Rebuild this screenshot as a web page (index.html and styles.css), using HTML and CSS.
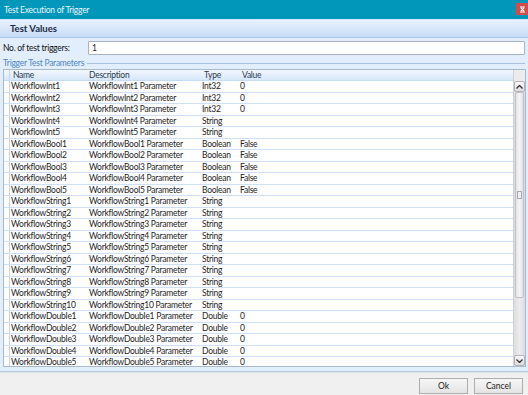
FILE: index.html
```html
<!DOCTYPE html>
<html lang="en">
<head>
  <meta charset="UTF-8">
  <title>Test Execution of Trigger</title>
  <link rel="stylesheet" href="styles.css">
</head>
<body>
  <div class="window">
    <div class="titlebar">
      <span class="title">Test Execution of Trigger</span>
      <span class="close-btn">
        <svg width="7" height="7" viewBox="0 0 7 7"><path d="M1 1h5M1 6h5M2 2l3 3M5 2l-3 3" stroke="#fff" stroke-width="1.2" fill="none"/></svg>
      </span>
    </div>
    <div class="section-header">Test Values</div>

    <div class="content">
      <div class="field-row">
        <label>No. of test triggers:</label>
        <div class="text-input">1</div>
      </div>
      <div class="group-label"><span>Trigger Test Parameters</span></div>

      <div class="grid">
        <div class="grid-main">
          <div class="grid-row grid-head">
            <div class="row-head"></div>
            <div class="cell name">Name</div>
            <div class="cell desc">Description</div>
            <div class="cell type">Type</div>
            <div class="cell value">Value</div>
          </div>
          <div class="grid-rows" id="rows"></div>
        </div>
        <div class="scrollbar">
          <div class="sb-corner"></div>
          <div class="sb-btn">
            <svg width="7" height="4" viewBox="0 0 7 4"><path d="M0.5 3.5L3.5 0.5L6.5 3.5" stroke="#333" stroke-width="1.3" fill="none"/></svg>
          </div>
          <div class="sb-track">
            <div class="sb-thumb"><span class="grip"></span></div>
          </div>
          <div class="sb-btn">
            <svg width="7" height="4" viewBox="0 0 7 4"><path d="M0.5 0.5L3.5 3.5L6.5 0.5" stroke="#333" stroke-width="1.3" fill="none"/></svg>
          </div>
        </div>
      </div>
    </div>

    <div class="footer">
      <button class="btn">Ok</button>
      <button class="btn">Cancel</button>
    </div>
  </div>

  <script>
    // parameter rows
    const params = [];
    for (let i = 1; i <= 5; i++) params.push(['WorkflowInt' + i, i <= 3 ? 'Int32' : 'String', i <= 3 ? '0' : '']);
    for (let i = 1; i <= 5; i++) params.push(['WorkflowBool' + i, 'Boolean', 'False']);
    for (let i = 1; i <= 10; i++) params.push(['WorkflowString' + i, 'String', '']);
    for (let i = 1; i <= 5; i++) params.push(['WorkflowDouble' + i, 'Double', '0']);

    const rows = document.getElementById('rows');
    params.forEach(([name, type, value]) => {
      const row = document.createElement('div');
      row.className = 'grid-row';
      row.innerHTML =
        '<div class="row-head"></div>' +
        '<div class="cell name">' + name + '</div>' +
        '<div class="cell desc">' + name + ' Parameter</div>' +
        '<div class="cell type">' + type + '</div>' +
        '<div class="cell value">' + value + '</div>';
      rows.appendChild(row);
    });
  </script>
</body>
</html>
```

FILE: styles.css
```css
body {
  margin: 0;
  font-family: Lato, 'Liberation Sans', Arial, sans-serif;
  font-size: 8.5px;
  letter-spacing: -0.25px;
  color: #1e1e1e;
}
.window {
  width: 528px;
  height: 395px;
  display: flex;
  flex-direction: column;
  overflow: hidden;
  background: #f0f0f0;
}
.titlebar {
  height: 19px;
  background: #0097ba;
  display: flex;
  align-items: center;
  justify-content: space-between;
  padding-left: 4px;
  flex-shrink: 0;
}
.title {
  color: #e8f6fa;
  font-size: 8.5px;
}
.close-btn {
  width: 12px;
  height: 12px;
  background: #d24c4c;
  display: flex;
  align-items: center;
  justify-content: center;
  align-self: flex-start;
  margin-top: 3px;
}
.section-header {
  height: 17px;
  flex-shrink: 0;
  background: linear-gradient(#e9f2fe, #c6dbf7);
  border-bottom: 1px solid #a6c3e8;
  border-top: 1px solid #d4e5fb;
  padding-left: 10px;
  font-weight: bold;
  font-size: 9.5px;
  letter-spacing: 0;
  color: #1b2b44;
  line-height: 17px;
}
.content {
  background: #e3eefc;
  padding: 3px 2px 4px 3px;
  height: 334px;
  flex-shrink: 0;
  box-sizing: border-box;
  display: flex;
  flex-direction: column;
  border-bottom: 1px solid #b8c9dc;
}
.field-row {
  display: flex;
  align-items: center;
  height: 14px;
}
.field-row label {
  width: 85px;
  color: #111;
}
.text-input {
  flex: 1;
  height: 12px;
  background: #fff;
  border: 1px solid #aab3bd;
  border-radius: 1px;
  padding-left: 3px;
  line-height: 12px;
  margin-right: 1px;
}
.group-label {
  display: flex;
  align-items: center;
  margin-top: 3px;
  height: 10px;
  color: #4f86c2;
}
.group-label::after {
  content: "";
  flex: 1;
  height: 1px;
  background: #a9c2df;
  margin-left: 3px;
  margin-right: 1px;
}
.grid {
  margin-top: 1px;
  flex: 1;
  display: flex;
  border: 1px solid #a7b9cc;
  background: #fff;
  overflow: hidden;
}
.grid-main {
  flex: 1;
  display: flex;
  flex-direction: column;
  overflow: hidden;
}
.grid-row {
  display: grid;
  grid-template-columns: 6px 78px 113px 38px 1fr;
  height: 11.5px;
  flex-shrink: 0;
  border-bottom: 1px solid #cfe0f6;
  box-sizing: border-box;
  line-height: 11px;
  white-space: nowrap;
}
.grid-head {
  height: 11px;
  background: linear-gradient(#f4f8fe, #d7e7fb);
  border-bottom: 1px solid #c6dbf5;
  color: #2a3a50;
}
.grid-head .cell {
  padding-left: 3px;
}
.grid-head .desc {
  padding-left: 1px;
}
.row-head {
  border-right: 1px solid #c7d5e6;
  background: #fff;
}
.grid-head .row-head {
  background: transparent;
}
.cell {
  padding-left: 1px;
  overflow: hidden;
}
.grid-rows {
  flex: 1;
  overflow: hidden;
}
.scrollbar {
  width: 11px;
  display: flex;
  flex-direction: column;
  background: linear-gradient(90deg, #dcdce0, #ececef 50%, #dcdce0);
  border-left: 1px solid #cfcfd4;
}
.sb-corner {
  height: 11px;
  background: #ececec;
}
.sb-btn {
  height: 11px;
  display: flex;
  align-items: center;
  justify-content: center;
  background: linear-gradient(#f8f8f8, #dcdcdc);
  border: 1px solid #b4b4b8;
  border-radius: 2px;
  box-sizing: border-box;
}
.sb-track {
  flex: 1;
  padding: 0 1px;
}
.sb-thumb {
  height: 206px;
  background: linear-gradient(90deg, #e6e6ea, #f4f4f6 50%, #e2e2e6);
  border: 1px solid #bfbfc6;
  border-radius: 2px;
  box-sizing: border-box;
  display: flex;
  align-items: center;
  justify-content: center;
}
.grip {
  width: 3px;
  height: 6px;
  border: 1px solid #a8a8b0;
  background: #f0f0f0;
}
.footer {
  flex: 1;
  display: flex;
  justify-content: flex-end;
  align-items: flex-start;
  gap: 6px;
  padding: 5px 5px 0 0;
  border-top: 1px solid #dfe5ec;
}
.btn {
  width: 49px;
  height: 16px;
  font-family: inherit;
  font-size: 8.5px;
  color: #1e1e1e;
  background: linear-gradient(#f6f6f6, #e4e4e4);
  border: 1px solid #adadad;
  border-radius: 0;
  padding: 0;
}
```
